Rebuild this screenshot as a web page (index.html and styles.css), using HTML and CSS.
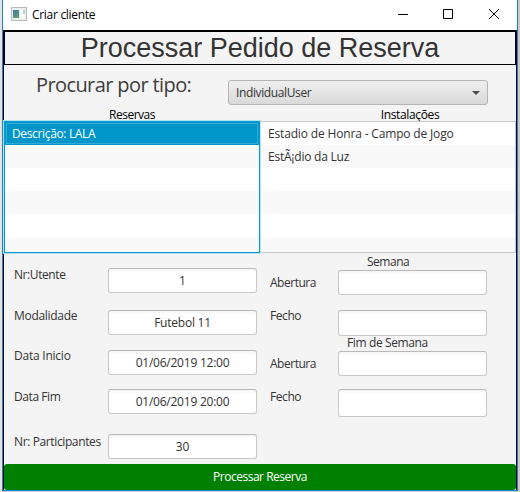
FILE: index.html
```html
<!DOCTYPE html>
<html lang="pt">
<head>
<meta charset="utf-8">
<title>Criar cliente</title>
<link rel="stylesheet" href="styles.css">
</head>
<body>
<div class="window">
  <header class="titlebar">
    <svg class="app-icon" width="16" height="14" viewBox="0 0 16 14"><defs><linearGradient id="g" x2="0.4" y2="1"><stop stop-color="#4478a8"/><stop offset="1" stop-color="#55a173"/></linearGradient></defs><rect x=".5" y=".5" width="15" height="13" fill="#eee" stroke="#b8bcc0"/><rect x="2" y="3" width="6" height="8" fill="url(#g)"/><rect x="9" y="3" width="3" height="8" fill="#fff"/><rect x="12" y="3" width="2" height="4" fill="#b0d0cc"/><path d="M12 7h2v4h-2z" fill="#f8f8f8"/></svg>
    <span class="caption"><span class="t-win">Criar cliente</span></span>
    <svg class="controls" width="112" height="12" viewBox="0 0 112 12" fill="none" stroke="#000"><path d="M4 6.500h10M49.500 1.500h9v9h-9zM95 1l10 10M105 1l-10 10"/></svg>
  </header>
  <main class="content">
    <h1 class="heading">Processar Pedido de Reserva</h1>
    <div class="search">
      <span class="search-label">Procurar por tipo:</span>
      <div class="combo"><span class="t-combo">IndividualUser</span><i class="arrow"></i></div>
    </div>
    <div class="list-titles"><span class="t-res">Reservas</span><span class="t-inst">Instalações</span></div>
    <div class="lists">
      <div class="list focused">
        <div class="item selected"><span class="t-desc">Descrição: LALA</span></div>
        <div class="item"></div><div class="item"></div><div class="item"></div><div class="item"></div><div class="item"></div>
      </div>
      <div class="list">
        <div class="item"><span class="t-estadio">Estadio de Honra - Campo de Jogo</span></div>
        <div class="item"><span class="t-luz">EstÃ¡dio da Luz</span></div>
        <div class="item"></div><div class="item"></div><div class="item"></div><div class="item"></div>
      </div>
    </div>
    <div class="form">
      <div class="left">
        <label class="l1"><span class="t-nr">Nr:Utente</span></label><div class="field">1</div>
        <label class="l2"><span class="t-mod">Modalidade</span></label><div class="field"><span class="t-fut">Futebol 11</span></div>
        <label class="l2"><span class="t-ini">Data Inicio</span></label><div class="field"><span class="t-date">01/06/2019 12:00</span></div>
        <label><span class="t-fim">Data Fim</span></label><div class="field"><span class="t-date">01/06/2019 20:00</span></div>
        <label><span class="t-part">Nr: Participantes</span></label><div class="field"><span class="t-30">30</span></div>
      </div>
      <div class="right">
        <div class="group g1"><span class="t-sem">Semana</span></div>
        <label class="open"><span class="t-ab">Abertura</span></label><div class="field"></div>
        <label class="close"><span class="t-fe">Fecho</span></label><div class="field f2"></div>
        <div class="group g2"><span class="t-fds">Fim de Semana</span></div>
        <label class="open"><span class="t-ab">Abertura</span></label><div class="field"></div>
        <label class="last"><span class="t-fe">Fecho</span></label><div class="field f4"></div>
      </div>
    </div>
    <div class="submit"><span class="t-sub">Processar Reserva</span></div>
  </main>
</div>
</body>
</html>
```
FILE: styles.css
```css
* { box-sizing: border-box; }
body {
  margin: 0;
  width: 520px;
  height: 492px;
  overflow: hidden;
  padding: 0 2px 1px;
  background: linear-gradient(90deg, #e4e4e4 2px, #cbc8c6 2px);
  font: 12px/16px "Open Sans", "Noto Sans", sans-serif;
  color: #333;
  white-space: nowrap;
}
.window { width: 516px; height: 491px; border: 1px solid #1883d7; border-top: 0; background: #fff; }
.titlebar { height: 30px; display: flex; align-items: center; padding: 0 11px 2px 8px; color: #000; }
.app-icon { margin-right: 5px; }
.caption { flex: 1; padding-top: 1px; }
.content { height: 460px; background: #f4f4f4; border: solid #000; border-width: 0 1px; }
.heading {
  margin: 0 -1px;
  height: 35px;
  border: solid #000;
  border-width: 2px 2px 1px;
  font: 27px/33px "Liberation Sans", sans-serif;
  text-align: center;
}
.search { height: 42px; display: flex; padding-left: 32px; }
.search-label { width: 192px; font-size: 20px; line-height: 40px; letter-spacing: -.6px; color: #3c3c3c; }
.combo {
  width: 260px;
  height: 25px;
  margin-top: 15px;
  display: flex;
  align-items: center;
  justify-content: space-between;
  padding: 0 7px;
  border: 1px solid #b5b5b5;
  border-radius: 3px;
  background: linear-gradient(#efefef, #d9d9d9);
}
.arrow { border: 4px solid transparent; border-top-color: #4b4b4b; border-bottom: 0; }
.list-titles { height: 14px; display: grid; grid-template-columns: 256px 256px; text-align: center; line-height: 15px; color: #000; }
.t-inst { padding-left: 44px; }
.lists { height: 132px; display: grid; grid-template-columns: 256px 256px; }
.list { border: 1px solid #c8c8c8; background: #fff; overflow: hidden; }
.item { height: 23px; padding-left: 7px; line-height: 24px; }
.item:nth-child(even) { background: #f9f9f9; }
.focused { border: 1px solid #039ed3; box-shadow: inset 0 1px #039ed3, 0 0 0 1px #b6e1ef; z-index: 1; }
.item.selected { background: #0096c9; color: #fff; box-shadow: inset 0 0 0 1px #0096c9, inset 0 0 0 2px #33abd4; }
.form { height: 211px; display: grid; grid-template-columns: 256px 256px; }
.left { display: grid; grid-template-columns: 94px 149px; grid-template-rows: 42px 40px 39px 45px 25px; padding: 15px 0 0 10px; }
.right { display: grid; grid-template-columns: 68px 149px; grid-template-rows: 17px 40px 26px 15px 38px 28px; padding-left: 10px; }
.field {
  height: 25px;
  border: 1px solid #c8c8c8;
  border-top-color: #b9b9b9;
  border-radius: 3px;
  background: linear-gradient(#f5f5f5, #fff 4px);
  text-align: center;
  line-height: 24px;
}
.f2 { height: 26px; }
.f4 { height: 28px; }
.l1 { margin-top: -1px; }
.l2 { margin-top: -2px; }
.open { margin-top: 5px; }
.close { margin-top: -2px; }
.group { grid-column: 1 / 3; }
.g1 { padding-left: 97px; padding-top: 1px; }
.g2 { padding-left: 77px; margin-top: -1px; }
.submit { height: 26px; border-radius: 3px; background: #008000; color: #fff; text-align: center; line-height: 26px; }

/* Tracking per text */
.t-win, .t-mod { letter-spacing: -.3px; }
.t-combo, .t-fds, .t-part { letter-spacing: -.38px; }
.t-res, .t-sem, .t-ab, .t-sub { letter-spacing: -.48px; }
.t-inst, .t-desc { letter-spacing: -.35px; }
.t-estadio { letter-spacing: -.16px; }
.t-luz, .t-ini, .t-fut, .t-date { letter-spacing: -.23px; }
.t-nr, .t-fim, .t-fe { letter-spacing: -.42px; }
```
